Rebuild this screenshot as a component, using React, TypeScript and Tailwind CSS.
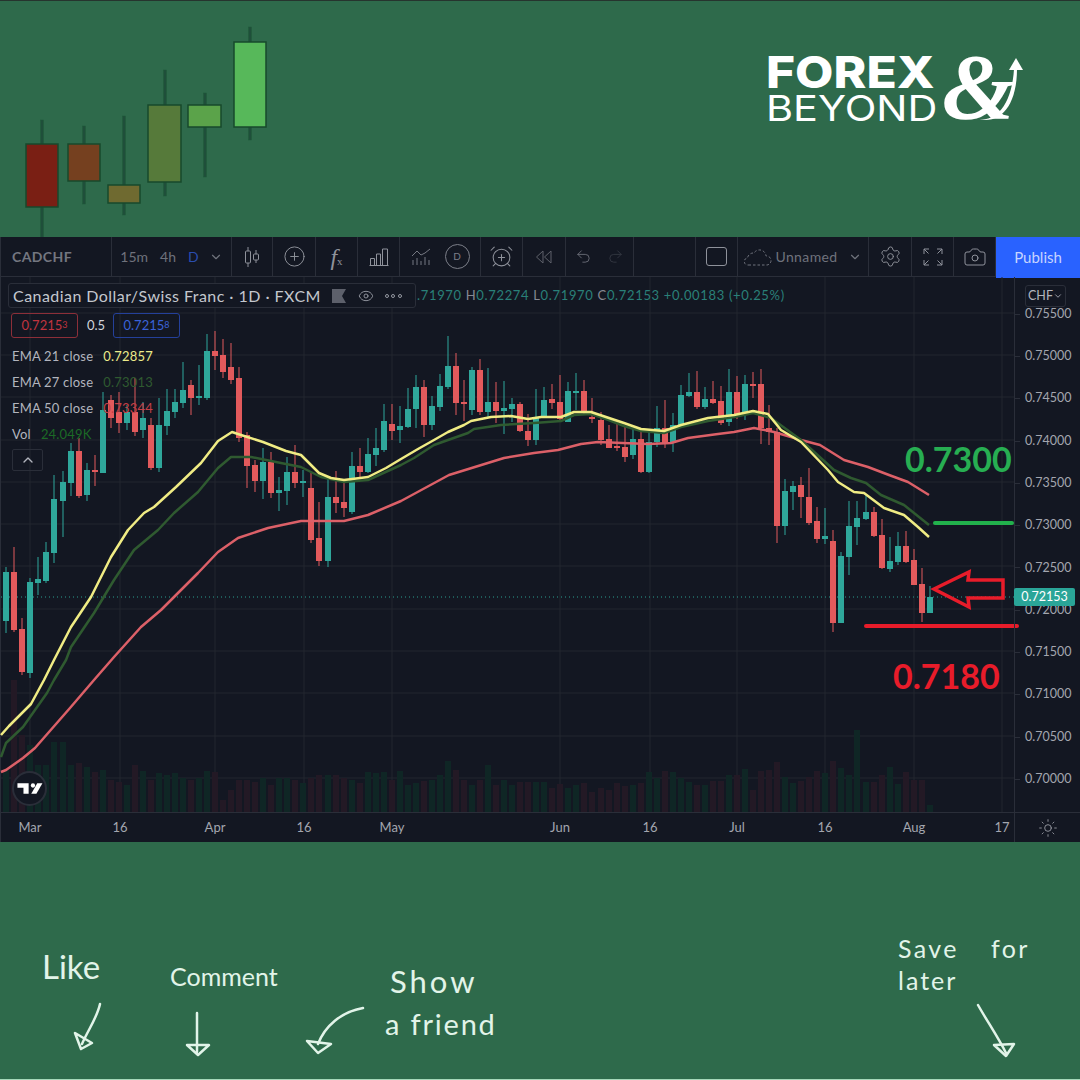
import { AlarmClockPlus, Camera, ChevronDown, ChevronUp, CirclePlus, Eye, Redo2, Settings, Sun, Undo2 } from "lucide-react";

// high, body top, body bottom, low, up
type Candle = [number, number, number, number, number];

const candles: Candle[] = [
  [567, 572, 621, 633, 1], [547, 572, 630, 632, 0], [618, 629, 672, 675, 0], [578, 582, 673, 678, 1],
  [557, 579, 583, 595, 1], [542, 552, 581, 583, 1], [475, 499, 553, 563, 1], [471, 482, 501, 537, 1],
  [443, 451, 483, 496, 1], [438, 451, 496, 498, 0], [463, 470, 495, 501, 1], [455, 470, 472, 486, 0],
  [392, 410, 473, 473, 1], [395, 400, 418, 428, 0], [392, 412, 423, 433, 0], [405, 412, 423, 430, 1],
  [378, 412, 432, 436, 0], [402, 418, 430, 438, 1], [418, 425, 468, 470, 0], [398, 425, 468, 472, 1],
  [389, 411, 426, 435, 1], [389, 402, 412, 418, 1], [362, 390, 403, 408, 1], [380, 385, 398, 415, 0],
  [365, 396, 398, 405, 1], [334, 351, 398, 400, 1], [331, 351, 356, 370, 0], [339, 355, 372, 378, 0],
  [343, 367, 380, 384, 0], [367, 378, 438, 442, 0], [432, 435, 466, 488, 0], [460, 465, 481, 492, 0],
  [448, 462, 481, 499, 1], [452, 462, 493, 498, 0], [477, 490, 493, 511, 1], [457, 472, 491, 505, 1],
  [445, 472, 483, 488, 0], [470, 481, 483, 497, 1], [473, 488, 540, 543, 0], [502, 538, 561, 566, 0],
  [477, 497, 561, 567, 1], [471, 497, 503, 513, 0], [482, 502, 508, 517, 0], [452, 466, 512, 514, 1],
  [448, 466, 472, 478, 0], [438, 454, 472, 473, 1], [428, 448, 455, 466, 1], [404, 421, 450, 452, 1],
  [404, 424, 431, 440, 0], [406, 426, 430, 443, 1], [388, 409, 427, 428, 1], [375, 387, 409, 428, 1],
  [380, 387, 425, 437, 0], [396, 406, 425, 430, 1], [374, 386, 407, 411, 1], [336, 366, 387, 389, 1],
  [353, 366, 403, 415, 0], [380, 402, 404, 421, 0], [367, 370, 410, 415, 1], [359, 370, 412, 415, 0],
  [368, 402, 412, 417, 1], [382, 402, 411, 423, 0], [381, 408, 411, 434, 1], [398, 404, 409, 422, 1],
  [402, 404, 431, 432, 0], [414, 431, 440, 446, 0], [389, 418, 440, 445, 1], [387, 400, 416, 418, 1],
  [384, 399, 403, 409, 0], [375, 402, 419, 422, 0], [382, 391, 422, 422, 1], [373, 391, 392, 410, 1],
  [380, 391, 413, 415, 0], [398, 417, 419, 423, 0], [412, 420, 440, 445, 0], [425, 439, 448, 448, 0],
  [423, 446, 447, 451, 0], [427, 447, 457, 462, 0], [429, 439, 455, 459, 1], [431, 439, 472, 473, 0],
  [432, 442, 472, 473, 1], [406, 428, 442, 447, 1], [400, 428, 444, 448, 0], [413, 425, 442, 452, 1],
  [385, 395, 426, 427, 1], [373, 392, 396, 397, 1], [371, 392, 407, 409, 0], [387, 399, 407, 409, 1],
  [381, 399, 403, 404, 0], [386, 401, 423, 425, 0], [369, 392, 422, 426, 1], [376, 392, 415, 419, 0],
  [375, 384, 412, 420, 1], [372, 384, 385, 398, 0], [369, 384, 428, 444, 0], [405, 428, 432, 445, 0],
  [428, 432, 526, 543, 0], [479, 491, 526, 535, 1], [481, 486, 492, 510, 1], [477, 485, 497, 518, 0],
  [468, 497, 523, 525, 0], [507, 521, 539, 543, 0], [508, 536, 539, 544, 1], [530, 541, 623, 632, 0],
  [552, 556, 623, 623, 1], [501, 526, 557, 575, 1], [501, 518, 527, 545, 1], [495, 512, 519, 520, 1],
  [507, 512, 536, 537, 0], [519, 535, 568, 569, 0], [537, 561, 569, 572, 1], [532, 546, 562, 565, 1],
  [531, 546, 562, 563, 0], [549, 560, 585, 585, 0], [568, 584, 613, 622, 0], [586, 597, 613, 613, 1],
];

// top of each volume bar, matches candles by index
const volumes = [
  770, 680, 735, 745, 765, 765, 742, 742, 765, 763, 767, 772, 770, 780, 782, 785, 765, 771, 780, 773,
  775, 773, 778, 780, 778, 771, 772, 800, 790, 780, 780, 782, 778, 785, 778, 778, 780, 783, 778, 775,
  775, 775, 778, 780, 783, 772, 773, 772, 780, 771, 785, 783, 781, 780, 775, 761, 770, 780, 785, 780,
  765, 785, 780, 785, 782, 782, 782, 782, 788, 784, 788, 785, 783, 792, 788, 790, 783, 786, 785, 783,
  772, 778, 771, 772, 778, 782, 785, 785, 781, 781, 775, 775, 769, 790, 771, 770, 762, 777, 783, 781,
  777, 771, 773, 761, 768, 775, 730, 782, 782, 775, 767, 784, 772, 780, 780, 805,
];

const ema21 = "0,735 8,726 22,712 30,704 43,680 53,660 70,627 90,597 110,557 127,530 143,513 153,507 175,487 200,463 217,441 231,432 240,435 262,442 285,451 300,455 318,473 330,478 343,480 367,477 385,468 400,459 417,449 433,440 447,432 463,425 470,421 490,417 510,416 527,419 540,417 560,417 573,412 590,412 605,417 623,423 640,429 663,431 680,425 707,418 733,415 752,411 767,414 780,430 800,442 827,470 837,482 853,492 863,493 883,508 903,515 917,527 928,537";
const ema27 = "0,757 5,743 22,727 46,693 53,680 65,660 70,647 93,613 113,580 133,550 157,530 173,513 197,492 217,468 230,457 250,457 275,462 300,467 320,477 343,482 367,480 400,465 413,458 433,445 447,440 467,433 473,429 500,425 533,423 560,421 573,415 590,414 605,419 623,426 640,431 663,433 680,427 707,421 733,417 752,413 770,418 800,440 833,470 850,478 865,483 880,495 903,505 928,525";
const ema50 = "0,772 5,770 22,758 34,748 69,708 93,680 113,657 140,627 160,610 197,573 217,552 237,538 267,528 300,521 343,521 367,515 400,501 448,475 503,458 533,453 557,450 580,444 597,442 647,444 670,443 687,438 717,434 733,432 753,428 773,432 800,440 819,445 843,460 867,467 888,475 907,482 928,495";

const gridY = [313, 355, 397, 440, 482, 524, 566, 609, 651, 693, 736, 778];
const gridX = [29, 119, 214, 303, 391, 559, 649, 736, 824, 913, 1001];
const prices = ["0.75500", "0.75000", "0.74500", "0.74000", "0.73500", "0.73000", "0.72500", "0.72000", "0.71500", "0.71000", "0.70500", "0.70000"];

const hand = "[font-family:Lato,sans-serif] font-normal text-[#e2f4e9] leading-none";

function Cell({ w, children }: { w: string; children?: React.ReactNode }) {
  return <div className={`${w} h-full shrink-0 flex items-center justify-center border-r border-[#2a2e39]`}>{children}</div>;
}

function Chart() {
  return (
    <svg viewBox="0 277 1014 535" className="absolute inset-0 w-[1014px] h-[535px] overflow-visible">
      {gridY.map((y) => (
        <line key={y} x1="0" x2="1014" y1={y} y2={y} stroke="#22262f" />
      ))}
      {gridX.map((x) => (
        <line key={x} x1={x} x2={x} y1="277" y2="812" stroke="#22262f" />
      ))}
      {volumes.map((top, i) => (
        <rect
          key={i}
          x={Math.round(5.3 + 8.03 * i) - 3}
          y={top}
          width="6"
          height={812 - top}
          fill={candles[i][4] ? "#0f2625" : "#231925"}
        />
      ))}
      <line x1="0" x2="1014" y1="597" y2="597" stroke="#2a9d8f" strokeDasharray="1 3" />
      {candles.map(([h, t, b, l, up], i) => {
        const x = Math.round(5.3 + 8.03 * i);
        const c = up ? "#2fa79b" : "#e25a5c";
        return (
          <g key={i} fill={c}>
            <rect x={x - 0.5} y={h} width="1" height={l - h} />
            <rect x={x - 3} y={t} width="6" height={Math.max(b - t, 2)} />
          </g>
        );
      })}
      <polyline points={ema50} fill="none" stroke="#dc6068" strokeWidth="2.5" strokeLinejoin="round" />
      <polyline points={ema27} fill="none" stroke="#2f5a30" strokeWidth="2.5" strokeLinejoin="round" />
      <polyline points={ema21} fill="none" stroke="#f0ec84" strokeWidth="2.5" strokeLinejoin="round" />
      <line x1="934" x2="1011" y1="523" y2="523" stroke="#22b14c" strokeWidth="4" strokeLinecap="round" />
      <line x1="865" x2="1016" y1="626" y2="626" stroke="#e81c2a" strokeWidth="4" strokeLinecap="round" />
      <polygon
        points="933,589 968,572 967,580 1002,580 1002,598 967,598 968,607"
        fill="none"
        stroke="#e81c2a"
        strokeWidth="3.5"
        strokeLinejoin="miter"
      />
    </svg>
  );
}

function Legend() {
  return (
    <div className="absolute left-[7px] top-[6px] flex flex-col items-start text-[13px] text-[#b2b5be]">
      <div className="flex items-center">
        <div className="w-[408px] h-[25px] flex items-center pl-[4px] border border-[#2a2e39] rounded-[3px] bg-[#131722]">
          <span className="text-[16px] tracking-[0.45px] text-[#c4c7ce] whitespace-nowrap">Canadian Dollar/Swiss Franc · 1D · FXCM</span>
          <svg viewBox="0 0 14 14" className="w-[14px] h-[14px] ml-[11px]">
            <path d="M0 0h14l-4 7 4 7H0z" fill="#5d606b" />
          </svg>
          <Eye size={16} strokeWidth={1.4} className="ml-[12px] text-[#9598a1]" />
          <span className="ml-[11px] flex gap-[2.5px]">
            <i className="w-[4px] h-[4px] rounded-full border border-[#9598a1]" />
            <i className="w-[4px] h-[4px] rounded-full border border-[#9598a1]" />
            <i className="w-[4px] h-[4px] rounded-full border border-[#9598a1]" />
          </span>
        </div>
        <span className="ml-[1px] text-[13px] tracking-[0.66px] text-[#2a8079] whitespace-nowrap">
          .71970 <span className="text-[#868993]">H</span>0.72274 <span className="text-[#868993]">L</span>0.71970{" "}
          <span className="text-[#868993]">C</span>0.72153 +0.00183 (+0.25%)
        </span>
      </div>
      <div className="flex items-center mt-[5px] ml-[3px]">
        <div className="w-[67px] h-[25px] flex items-center justify-center border border-[#8c2f39] rounded-[3px] text-[#c0343f]">
          0.7215<sup className="text-[9px] -top-[1px]">3</sup>
        </div>
        <span className="ml-[9px] w-[26px] text-[#d1d4dc]">0.5</span>
        <div className="w-[67px] h-[25px] flex items-center justify-center border border-[#24409a] rounded-[3px] text-[#3a62d8]">
          0.7215<sup className="text-[9px] -top-[1px]">8</sup>
        </div>
      </div>
      <div className="flex flex-col ml-[4px] mt-[6px] tracking-[0.2px]">
        <div className="h-[26px] flex items-center gap-[10px]">
          <span>EMA 21 close</span>
          <span className="text-[#eceb8a]">0.72857</span>
        </div>
        <div className="h-[26px] flex items-center gap-[10px]">
          <span>EMA 27 close</span>
          <span className="text-[#2f5a30]">0.73013</span>
        </div>
        <div className="h-[26px] flex items-center gap-[10px]">
          <span>EMA 50 close</span>
          <span className="text-[#c43f46]">0.73344</span>
        </div>
        <div className="h-[26px] flex items-center gap-[10px]">
          <span>Vol</span>
          <span className="text-[#1c6a26]">24.049K</span>
        </div>
      </div>
      <button className="ml-[4px] mt-[1px] w-[31px] h-[22px] flex items-center justify-center border border-[#2a2e39] rounded-[2px] text-[#b2b5be]">
        <ChevronUp size={16} strokeWidth={2} />
      </button>
    </div>
  );
}

function Toolbar() {
  return (
    <div className="h-[40px] flex items-center border-b border-[#2a2e39] text-[#6f727c] text-[14px]">
      <Cell w="w-[111px]">
        <span className="w-full pl-[11px] font-bold text-[#737680] tracking-[0.4px]">CADCHF</span>
      </Cell>
      <Cell w="w-[120px]">
        <span className="flex items-center gap-[12px]">
          <span>15m</span>
          <span>4h</span>
          <span className="text-[#2a4db0]">D</span>
          <ChevronDown size={14} className="-ml-[2px]" />
        </span>
      </Cell>
      <Cell w="w-[41px]">
        <svg viewBox="0 0 18 22" className="w-[18px] h-[22px]" fill="none" stroke="#8f929b">
          <path d="M5 1v4M5 17v4M13 4v4M13 14v3" />
          <rect x="2.5" y="5" width="5" height="12" rx="1" />
          <rect x="10.5" y="8" width="5" height="6" rx="1" />
        </svg>
      </Cell>
      <Cell w="w-[43px]">
        <CirclePlus size={23} strokeWidth={1} className="text-[#8f929b]" />
      </Cell>
      <Cell w="w-[42px]">
        <span className="[font-family:'Liberation_Serif',serif] italic text-[24px] text-[#8f929b] leading-none">
          f<span className="text-[11px] not-italic">x</span>
        </span>
      </Cell>
      <Cell w="w-[42px]">
        <svg viewBox="0 0 20 18" className="w-[20px] h-[18px]" fill="none" stroke="#8f929b">
          <path d="M.5 17.5h19M1.5 17.5v-7h4v7M7.5 17.5V6h4v11.5M13.5 17.5V1h5v16.5" />
        </svg>
      </Cell>
      <Cell w="w-[81px]">
        <span className="flex items-center gap-[14px]">
          <svg viewBox="0 0 20 18" className="w-[20px] h-[18px]" fill="none" stroke="#757882">
            <path d="M1 8l5-5 4 4 4-2 5-4M2 12v5M6 10v7M10 13v4M14 9v8M18 12v5" />
          </svg>
          <span className="w-[25px] h-[25px] rounded-full border border-[#7b7e88] flex items-center justify-center text-[10px] text-[#7b7e88]">D</span>
        </span>
      </Cell>
      <Cell w="w-[42px]">
        <AlarmClockPlus size={25} strokeWidth={1} className="text-[#8f929b]" />
      </Cell>
      <Cell w="w-[43px]">
        <svg viewBox="0 0 18 14" className="w-[18px] h-[14px]" fill="none" stroke="#5e616a">
          <path d="M8 1L1.500 7 8 13zM16 1L9.500 7l6.500 6z" />
        </svg>
      </Cell>
      <Cell w="w-[68px]">
        <span className="flex items-center gap-[15px]">
          <Undo2 size={17} strokeWidth={1.2} className="text-[#71747e]" />
          <Redo2 size={17} strokeWidth={1.2} className="text-[#363a45]" />
        </span>
      </Cell>
      <Cell w="w-[62px]" />
      <Cell w="w-[42px]">
        <span className="w-[21px] h-[19px] rounded-[3px] border border-[#8f929b]" />
      </Cell>
      <Cell w="w-[131px]">
        <span className="flex items-center">
          <svg viewBox="0 0 28 18" className="w-[28px] h-[18px]" fill="none" stroke="#71747e" strokeDasharray="2.5 2">
            <path d="M6 17H4a3.500 3.500 0 0 1-.5-7A6 6 0 0 1 10 5 6.500 6.500 0 0 1 22 8a4.500 4.500 0 0 1 1 9z" />
          </svg>
          <span className="ml-[3px] tracking-[0.4px] text-[#6f727c]">Unnamed</span>
          <ChevronDown size={14} className="ml-[10px] text-[#6f727c]" />
        </span>
      </Cell>
      <Cell w="w-[43px]">
        <Settings size={23} strokeWidth={1} className="text-[#8f929b]" />
      </Cell>
      <Cell w="w-[42px]">
        <svg viewBox="0 0 20 18" className="w-[20px] h-[18px]" fill="none" stroke="#8f929b">
          <path d="M1 6V1h5M1 1l4.500 4.500M19 6V1h-5M19 1l-4.500 4.500M1 12v5h5M1 17l4.500-4.500M19 12v5h-5M19 17l-4.500-4.500" />
        </svg>
      </Cell>
      <Cell w="w-[42px]">
        <Camera size={24} strokeWidth={1} className="text-[#8f929b]" />
      </Cell>
      <div className="flex-1 h-[41px] -mb-px bg-[#2962ff] flex items-center justify-center text-[15px] text-[#c6d4ff]">Publish</div>
    </div>
  );
}

function TimeAxis() {
  const ticks: [string, string][] = [
    ["Mar", "ml-[29px]"], ["16", "ml-[90px]"], ["Apr", "ml-[95px]"], ["16", "ml-[89px]"], ["May", "ml-[88px]"],
    ["Jun", "ml-[168px]"], ["16", "ml-[90px]"], ["Jul", "ml-[87px]"], ["16", "ml-[88px]"], ["Aug", "ml-[89px]"], ["17", "ml-[88px]"],
  ];
  return (
    <div className="h-[30px] flex items-center border-t border-[#2a2e39] text-[13px] text-[#a3a6af]">
      {ticks.map(([label, ml], i) => (
        <div key={i} className={`${ml} w-0 flex justify-center`}>
          <span>{label}</span>
        </div>
      ))}
    </div>
  );
}

function PriceAxis() {
  return (
    <div className="relative flex-1 flex flex-col border-l border-[#2a2e39] text-[12.5px] text-[#a3a6af]">
      <div className="h-[535px] pt-[16px] flex flex-col">
        {prices.map((p) => (
          <div key={p} className="h-[42.3px] shrink-0 flex items-center">
            <span className="w-[5px] h-px bg-[#2a2e39]" />
            <span className="ml-[5px]">{p}</span>
          </div>
        ))}
      </div>
      <div className="h-[30px] flex items-center justify-center border-t border-[#2a2e39]">
        <Sun size={20} strokeWidth={1} className="text-[#a3a6af]" />
      </div>
      <div className="absolute left-[10px] top-[8px] w-[41px] h-[22px] flex items-center justify-center border border-[#2a2e39] rounded-[3px] bg-[#131722] text-[#b2b5be]">
        CHF
        <ChevronDown size={10} />
      </div>
      <div className="absolute left-[-1px] top-[311px] w-[61px] h-[18px] flex items-center justify-center rounded-[2px] bg-[#2aa598] text-[12.5px] text-white">0.72153</div>
    </div>
  );
}

function Logo() {
  return (
    <div className="flex items-start mr-[57px] mt-[52px]">
      <div className="w-[173px] flex flex-col [font-family:Inter,sans-serif] text-white leading-none">
        <span className="h-[38px] text-[44px] font-extrabold leading-[38px] origin-left scale-x-[1.13]">FOREX</span>
        <span className="h-[30px] mt-[2px] text-[36px] font-normal leading-[30px] origin-left scale-x-[1.15]">BEYOND</span>
      </div>
      <div className="relative w-[84px] h-[70px]">
        <span className="absolute left-[3px] top-[-14px] [font-family:'Liberation_Serif',serif] italic font-bold text-[94px] leading-none text-white">&amp;</span>
        <svg viewBox="0 0 84 70" className="absolute inset-0 w-[84px] h-[70px] overflow-visible" fill="white">
          <path d="M38 66C58 70 73 50 75 16h3C78 52 62 72 38 66z" />
          <path d="M77 5l7 12H70z" />
        </svg>
      </div>
    </div>
  );
}

function Sticks() {
  const sticks = [
    [26, 143, 32, 63, 42, 119, 237, "#7a1f14"],
    [68, 143, 32, 37, 84, 125, 203, "#75401f"],
    [108, 184, 32, 18, 124, 115, 214, "#6f6a30"],
    [148, 104, 33, 77, 165, 69, 195, "#567a3a"],
    [188, 104, 33, 22, 205, 92, 176, "#5ba34a"],
    [234, 41, 32, 85, 250, 26, 139, "#57b85a"],
  ] as const;
  return (
    <svg viewBox="0 0 280 236" className="w-[280px] h-[236px] shrink-0">
      {sticks.map(([x, y, w, h, wx, wt, wb, fill]) => (
        <g key={x}>
          <rect x={wx - 1.5} y={wt} width="3" height={wb - wt} fill="#1f4f3a" stroke="#1e5a38" strokeWidth="0.5" />
          <rect x={x} y={y} width={w} height={h} fill={fill} stroke="#17492c" strokeWidth="1.5" />
        </g>
      ))}
    </svg>
  );
}

function Footer() {
  const line = { fill: "none", stroke: "#e2f4e9", strokeWidth: 2.5, strokeLinecap: "round", strokeLinejoin: "round" } as const;
  return (
    <div className="flex-1 flex items-start border-b border-[#a5d8b9]">
      <div className="w-[70px] ml-[42px] mt-[108px] flex flex-col">
        <span className={`${hand} text-[33px]`}>Like</span>
        <svg viewBox="70 1003 35 52" className="w-[35px] h-[52px] mt-[18px] ml-[28px]" {...line}>
          <path d="M100 1006c-3 14-12 26-18 40" />
          <path d="M75 1035l6 16 11-6z" />
        </svg>
      </div>
      <div className="w-[110px] ml-[58px] mt-[122px] flex flex-col">
        <span className={`${hand} text-[25px]`}>Comment</span>
        <svg viewBox="184 1010 28 48" className="w-[28px] h-[48px] mt-[21px] ml-[14px]" {...line}>
          <path d="M197 1013v39" />
          <path d="M187 1045l11 10 11-10z" />
        </svg>
      </div>
      <svg viewBox="303 1006 62 52" className="w-[62px] h-[52px] mt-[163px] ml-[24px] shrink-0" {...line}>
        <path d="M362 1009c-22 4-38 18-45 36" />
        <path d="M306 1042l11 12 13-9z" />
      </svg>
      <div className="w-[115px] ml-[19px] mt-[124px] flex flex-col">
        <span className={`${hand} text-[31px] tracking-[3px] ml-[5px]`}>Show</span>
        <span className={`${hand} text-[29px] tracking-[1.8px] mt-[12px] whitespace-nowrap`}>a friend</span>
      </div>
      <div className="ml-[398px] mt-[94px] flex flex-col">
        <span className={`${hand} text-[25px] tracking-[2.4px] flex gap-[32px]`}>
          <span>Save</span>
          <span>for</span>
        </span>
        <span className={`${hand} text-[25px] tracking-[2px] mt-[7px]`}>later</span>
        <svg viewBox="974 1002 42 56" className="w-[42px] h-[56px] mt-[9px] ml-[77px]" {...line}>
          <path d="M977 1005c9 16 20 32 28 48" />
          <path d="M993 1045l12 11 8-12z" />
        </svg>
      </div>
    </div>
  );
}

export default function App() {
  return (
    <div className="w-[1080px] h-[1080px] flex flex-col bg-[#2e6a4b] overflow-hidden border-t border-[#26342e] [font-family:Lato,sans-serif]">
      <div className="h-[236px] flex justify-between">
        <Sticks />
        <Logo />
      </div>
      <div className="h-[605px] flex flex-col bg-[#131722] border-l border-[#2a2e39]">
        <Toolbar />
        <div className="flex-1 flex">
          <div className="w-[1013px] flex flex-col">
            <div className="relative h-[535px]">
              <Chart />
              <Legend />
              <span className="absolute left-[904px] top-[165px] text-[34px] font-bold leading-none text-[#27ae52]">0.7300</span>
              <span className="absolute left-[892px] top-[382px] text-[34px] font-bold leading-none text-[#e81c2a]">0.7180</span>
              <div className="absolute left-[11px] top-[494px] w-[35px] h-[35px] rounded-full bg-[#131722] border-2 border-[#2a2e39] flex items-center justify-center">
                <svg viewBox="0 0 36 36" className="w-[31px] h-[31px]" fill="white">
                  <path d="M4 12h13v12h-6v-7H4z" />
                  <circle cx="22" cy="14.500" r="2.500" />
                  <path d="M27 12h6l-7 12h-6z" />
                </svg>
              </div>
            </div>
            <TimeAxis />
          </div>
          <PriceAxis />
        </div>
      </div>
      <Footer />
    </div>
  );
}
